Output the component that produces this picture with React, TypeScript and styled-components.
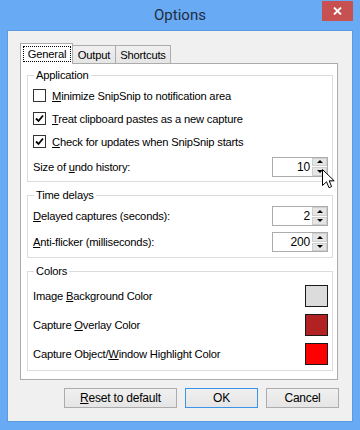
import React from 'react';
import styled, { createGlobalStyle } from 'styled-components';

const GlobalStyle = createGlobalStyle`
  html, body { margin: 0; padding: 0; background: #69aaf5; }
`;

const Window = styled.div`
  position: relative;
  width: 360px;
  height: 430px;
  background: #69aaf5;
  display: flex;
  flex-direction: column;
  font-family: 'Liberation Sans', Arial, sans-serif;
  font-size: 11.2px;
  letter-spacing: -0.2px;
  color: #000;
`;

const TitleBar = styled.div`
  height: 31px;
  flex: none;
  display: grid;
  grid-template-columns: 1fr auto 1fr;
  align-items: start;
`;

const Title = styled.div`
  grid-column: 2;
  font-family: Roboto, 'Liberation Sans', sans-serif;
  font-size: 15px;
  letter-spacing: 0;
  line-height: 30px;
  color: #1f2d3d;
`;

const CloseButton = styled.div`
  grid-column: 3;
  justify-self: end;
  margin: 1px 7px 0 0;
  width: 31px;
  height: 20px;
  background: #c75050;
  display: flex;
  align-items: center;
  justify-content: center;
`;

const Client = styled.div`
  flex: 1;
  margin: 0 8px 9px;
  background: #f0f0f0;
  box-shadow: 0 0 0 1px #5b9be2;
  padding: 12px 13px 13px 12px;
  display: flex;
  flex-direction: column;
`;

const TabStrip = styled.div`
  height: 20px;
  flex: none;
  display: flex;
  align-items: flex-end;
`;

const Tab = styled.div<{ $active?: boolean; $width: number }>`
  box-sizing: border-box;
  width: ${p => p.$width}px;
  height: ${p => (p.$active ? 21 : 18)}px;
  margin-bottom: ${p => (p.$active ? -1 : 0)}px;
  margin-left: ${p => (p.$active ? 0 : -1)}px;
  position: relative;
  z-index: ${p => (p.$active ? 1 : 0)};
  border: 1px solid #acacac;
  border-bottom: none;
  background: ${p => (p.$active ? '#fff' : 'linear-gradient(#f0f0f0, #e5e5e5)')};
  display: flex;
  align-items: ${p => (p.$active ? 'flex-start' : 'center')};
  justify-content: ${p => (p.$active ? 'flex-start' : 'center')};
  padding: ${p => (p.$active ? '2px 0 0 2px' : '1px 0 0')};
  line-height: 14px;
`;

const FocusLabel = styled.span`
  display: block;
  width: 48px;
  box-sizing: border-box;
  border: 1px dotted #000;
  text-align: center;
  line-height: 14px;
`;

const Panel = styled.div`
  box-sizing: border-box;
  height: 317px;
  flex: none;
  margin-right: 1px;
  border: 1px solid #acacac;
  background: #fff;
  padding: 4px 4px 0 6px;
  display: flex;
  flex-direction: column;
  gap: 6px;
`;

const Group = styled.fieldset`
  margin: 0;
  padding: 0;
  min-width: 0;
  border: 1px solid #dcdcdc;
`;

const Legend = styled.legend`
  margin-left: 6px;
  padding: 0 2px;
  line-height: 15px;
`;

const Rows = styled.div<{ $pt: number; $pb: number }>`
  padding: ${p => p.$pt}px 4px ${p => p.$pb}px 5px;
  display: flex;
  flex-direction: column;
`;

const Row = styled.div<{ $h: number }>`
  height: ${p => p.$h}px;
  display: flex;
  align-items: center;
  justify-content: space-between;
`;

const CheckRow = styled.label`
  height: 23px;
  display: flex;
  align-items: center;
  gap: 6px;
`;

const Box = styled.span`
  box-sizing: border-box;
  width: 13px;
  height: 13px;
  border: 1px solid #333;
  background: #fff;
  display: flex;
  align-items: center;
  justify-content: center;
`;

const Spin = styled.div`
  box-sizing: border-box;
  width: 56px;
  height: 20px;
  border: 1px solid #acacac;
  background: #fff;
  display: flex;
`;

const SpinValue = styled.div`
  flex: 1;
  text-align: right;
  padding-right: 2px;
  line-height: 18px;
  font-size: 12px;
`;

const SpinButtons = styled.div`
  width: 15px;
  display: flex;
  flex-direction: column;
  gap: 1px;
`;

const SpinButton = styled.div`
  flex: 1;
  background: #e5e5e5;
  border: 1px solid #cfcfcf;
  display: flex;
  align-items: center;
  justify-content: center;
`;

const Arrow = styled.span<{ $down?: boolean }>`
  width: 0;
  height: 0;
  border-left: 3px solid transparent;
  border-right: 3px solid transparent;
  ${p => (p.$down ? 'border-top: 3px solid #000;' : 'border-bottom: 3px solid #000;')}
`;

const Swatch = styled.div<{ $color: string }>`
  box-sizing: border-box;
  width: 23px;
  height: 22px;
  border: 1px solid #1a1a1a;
  background: ${p => p.$color};
`;

const ButtonBar = styled.div`
  margin-top: 8px;
  display: flex;
  justify-content: flex-end;
  gap: 8px;
`;

const Button = styled.div<{ $width: number; $default?: boolean }>`
  box-sizing: border-box;
  width: ${p => p.$width}px;
  height: 20px;
  border: 1px solid ${p => (p.$default ? '#3c94e8' : '#acacac')};
  background: linear-gradient(#f0f0f0, #e5e5e5);
  display: flex;
  align-items: center;
  justify-content: center;
  font-size: 12px;
`;

const Cursor = styled.svg`
  position: absolute;
  left: 322px;
  top: 169px;
`;

const Check = () => (
  <svg width="9" height="9" viewBox="0 0 9 9">
    <path d="M1 4.5 L3.5 7 L8 1.5" fill="none" stroke="#000" strokeWidth="1.8" />
  </svg>
);

const CheckBox = ({ checked, children }: { checked?: boolean; children: React.ReactNode }) => (
  <CheckRow>
    <Box>{checked && <Check />}</Box>
    <span>{children}</span>
  </CheckRow>
);

const Spinner = ({ value }: { value: number }) => (
  <Spin>
    <SpinValue>{value}</SpinValue>
    <SpinButtons>
      <SpinButton><Arrow /></SpinButton>
      <SpinButton><Arrow $down /></SpinButton>
    </SpinButtons>
  </Spin>
);

const tabs = [
  { label: 'General', width: 53 },
  { label: 'Output', width: 44 },
  { label: 'Shortcuts', width: 56 },
];

const colors = [
  { label: <>Image <u>B</u>ackground Color</>, color: '#dcdcdc' },
  { label: <>Capture <u>O</u>verlay Color</>, color: '#b22222' },
  { label: <>Capture Object/<u>W</u>indow Highlight Color</>, color: '#ff0000' },
];

export default function App() {
  return (
    <Window>
      <GlobalStyle />
      <TitleBar>
        <Title>Options</Title>
        <CloseButton>
          <svg width="9" height="8" viewBox="0 0 9 8">
            <path d="M1 0.5 L8 7.5 M8 0.5 L1 7.5" stroke="#fff" strokeWidth="1.8" />
          </svg>
        </CloseButton>
      </TitleBar>
      <Client>
        <TabStrip>
          {tabs.map((t, i) => (
            <Tab key={t.label} $active={i === 0} $width={t.width}>
              {i === 0 ? <FocusLabel>{t.label}</FocusLabel> : t.label}
            </Tab>
          ))}
        </TabStrip>
        <Panel>
          <Group>
            <Legend>Application</Legend>
            <Rows $pt={1} $pb={1}>
              <CheckBox><u>M</u>inimize SnipSnip to notification area</CheckBox>
              <CheckBox checked><u>T</u>reat clipboard pastes as a new capture</CheckBox>
              <CheckBox checked><u>C</u>heck for updates when SnipSnip starts</CheckBox>
              <Row $h={27}>
                <span>Size of <u>u</u>ndo history:</span>
                <Spinner value={10} />
              </Row>
            </Rows>
          </Group>
          <Group>
            <Legend>Time delays</Legend>
            <Rows $pt={0} $pb={2}>
              <Row $h={26}>
                <span><u>D</u>elayed captures (seconds):</span>
                <Spinner value={2} />
              </Row>
              <Row $h={26}>
                <span><u>A</u>nti-flicker (milliseconds):</span>
                <Spinner value={200} />
              </Row>
            </Rows>
          </Group>
          <Group>
            <Legend>Colors</Legend>
            <Rows $pt={2} $pb={2}>
              {colors.map((c, i) => (
                <Row key={i} $h={29}>
                  <span>{c.label}</span>
                  <Swatch $color={c.color} />
                </Row>
              ))}
            </Rows>
          </Group>
        </Panel>
        <ButtonBar>
          <Button $width={113}><span><u>R</u>eset to default</span></Button>
          <Button $width={73} $default>OK</Button>
          <Button $width={73}>Cancel</Button>
        </ButtonBar>
      </Client>
      <Cursor width="13" height="20" viewBox="0 0 13 20">
        <path d="M0.5 0.5 V16.5 L4.5 12.8 L7 18.7 L9.6 17.6 L7.2 11.8 H12.2 Z" fill="#fff" stroke="#000" strokeWidth="1" />
      </Cursor>
    </Window>
  );
}
